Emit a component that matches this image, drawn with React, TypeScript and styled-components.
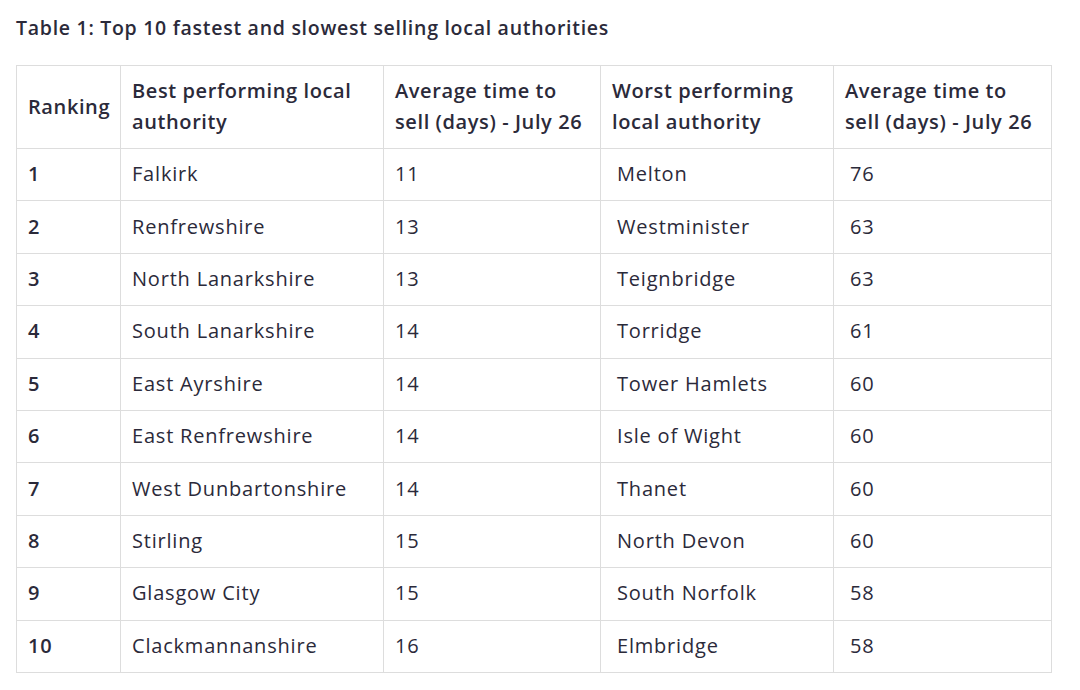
import React from "react";
import styled, { createGlobalStyle } from "styled-components";

const Global = createGlobalStyle`
  html, body { margin: 0; padding: 0; background: #ffffff; }
  body { font-family: "Open Sans", "Liberation Sans", sans-serif; color: #2b2a3a; }
`;

const Page = styled.div`
  padding: 14px 30px 0 16px;
  width: 1034px;
`;

const Title = styled.h2`
  margin: 0 0 23px 0;
  font-size: 19.5px;
  font-weight: 600;
  letter-spacing: 0.72px;
  line-height: 28px;
  color: #2b2a3a;
`;

const Table = styled.table`
  border-collapse: collapse;
  width: 1035px;
  table-layout: fixed;
`;

const Th = styled.th<{ $w: number }>`
  width: ${(p) => p.$w}px;
  border: 1px solid #dddddd;
  padding: 9px 8px 11px 11px;
  text-align: left;
  vertical-align: middle;
  font-size: 20px;
  font-weight: 600;
  letter-spacing: 0.6px;
  line-height: 31px;
  height: 83px;
  box-sizing: border-box;
`;

const Td = styled.td<{ $bold?: boolean; $indent?: boolean }>`
  border: 1px solid #dddddd;
  padding: 0 8px 2px ${(p) => (p.$indent ? 16 : 11)}px;
  height: 52.4px;
  box-sizing: border-box;
  font-size: 20px;
  font-weight: ${(p) => (p.$bold ? 600 : 400)};
  letter-spacing: 0.8px;
  line-height: 31px;
  vertical-align: middle;
`;

const rows: [string, string, string, string, string][] = [
  ["1", "Falkirk", "11", "Melton", "76"],
  ["2", "Renfrewshire", "13", "Westminister", "63"],
  ["3", "North Lanarkshire", "13", "Teignbridge", "63"],
  ["4", "South Lanarkshire", "14", "Torridge", "61"],
  ["5", "East Ayrshire", "14", "Tower Hamlets", "60"],
  ["6", "East Renfrewshire", "14", "Isle of Wight", "60"],
  ["7", "West Dunbartonshire", "14", "Thanet", "60"],
  ["8", "Stirling", "15", "North Devon", "60"],
  ["9", "Glasgow City", "15", "South Norfolk", "58"],
  ["10", "Clackmannanshire", "16", "Elmbridge", "58"],
];

export default function App() {
  return (
    <>
      <Global />
      <Page>
        <Title>Table 1: Top 10 fastest and slowest selling local authorities</Title>
        <Table>
          <thead>
            <tr>
              <Th $w={104}>Ranking</Th>
              <Th $w={263}>Best performing local authority</Th>
              <Th $w={217}>Average time to sell (days) - July 26</Th>
              <Th $w={233}>Worst performing local authority</Th>
              <Th $w={218}>Average time to sell (days) - July 26</Th>
            </tr>
          </thead>
          <tbody>
            {rows.map((r) => (
              <tr key={r[0]}>
                <Td $bold>{r[0]}</Td>
                <Td>{r[1]}</Td>
                <Td>{r[2]}</Td>
                <Td $indent>{r[3]}</Td>
                <Td $indent>{r[4]}</Td>
              </tr>
            ))}
          </tbody>
        </Table>
      </Page>
    </>
  );
}
